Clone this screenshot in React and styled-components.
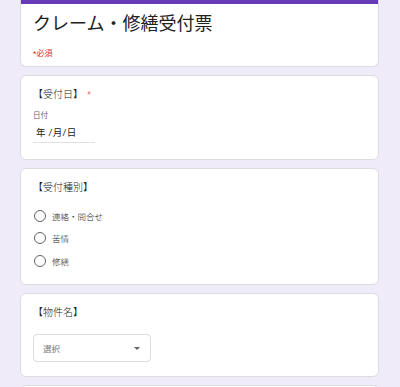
import React from 'react';
import styled, { createGlobalStyle } from 'styled-components';

const GlobalStyle = createGlobalStyle`
  html, body {
    margin: 0;
    padding: 0;
    background: #f0ebf8;
  }
  body {
    font-family: Roboto, 'Noto Sans CJK JP', sans-serif;
    color: #202124;
  }
`;

const Page = styled.div`
  display: flex;
  flex-direction: column;
  gap: 8px;
  padding: 0 21px 0 20px;
  width: 400px;
  height: 387px;
  box-sizing: border-box;
  overflow: hidden;
`;

const Card = styled.div`
  background: #fff;
  border: 1px solid #dadce0;
  border-radius: 6px;
  box-sizing: border-box;
  height: ${p => p.h}px;
  flex-shrink: 0;
  padding: 12px 12px;
  overflow: hidden;
`;

const HeadCard = styled(Card)`
  border-top: none;
  border-top-left-radius: 0;
  border-top-right-radius: 0;
  padding: 0;
`;

const Bar = styled.div`
  height: 4px;
  background: #673ab7;
`;

const HeadBody = styled.div`
  padding: 8px 12px 0;
`;

const Title = styled.h1`
  margin: 0;
  font-size: 18px;
  line-height: 24px;
  font-weight: 400;
  color: #202124;
`;

const Required = styled.div`
  margin-top: 13px;
  font-size: 8px;
  line-height: 10px;
  color: #d93025;
`;

const Label = styled.div`
  font-size: 10px;
  line-height: 14px;
  font-weight: 300;
  color: #202124;
  display: flex;
  gap: 4px;
`;

const Star = styled.span`
  color: #d93025;
  font-size: 9px;
`;

const SubLabel = styled.div`
  margin-top: 9px;
  font-size: 7.5px;
  line-height: 10px;
  color: #5f6368;
`;

const DateInput = styled.div`
  margin-top: 5px;
  width: 62px;
  font-size: 9.5px;
  line-height: 14px;
  padding: 0 0 2px 3px;
  box-sizing: border-box;
  color: #202124;
  border-bottom: 1px solid #e0e0e0;
  letter-spacing: 0.3px;
`;

const Options = styled.div`
  margin-top: 14px;
  display: flex;
  flex-direction: column;
  gap: 9.5px;
`;

const Option = styled.div`
  display: flex;
  align-items: center;
  gap: 6px;
  height: 13px;
  padding-left: 1px;
  font-size: 8.5px;
  font-weight: 300;
  color: #202124;
`;

const Radio = styled.span`
  width: 12px;
  height: 12px;
  border: 1.5px solid #5f6368;
  border-radius: 50%;
  box-sizing: border-box;
  flex-shrink: 0;
`;

const Select = styled.div`
  margin-top: 14px;
  width: 118px;
  height: 28px;
  border: 1px solid #dadce0;
  border-radius: 4px;
  box-sizing: border-box;
  display: flex;
  align-items: center;
  justify-content: space-between;
  padding: 0 10px 0 9px;
  font-size: 8.5px;
  color: #70757a;
`;

const Arrow = styled.span`
  width: 0;
  height: 0;
  border-left: 3px solid transparent;
  border-right: 3px solid transparent;
  border-top: 3px solid #5f6368;
`;

export default function App() {
  return (
    <>
      <GlobalStyle />
      <Page>
        <HeadCard h={67}>
          <Bar />
          <HeadBody>
            <Title>クレーム・修繕受付票</Title>
            <Required>*必須</Required>
          </HeadBody>
        </HeadCard>

        <Card h={85}>
          <Label>【受付日】<Star>*</Star></Label>
          <SubLabel>日付</SubLabel>
          <DateInput>年 /月/日</DateInput>
        </Card>

        <Card h={117}>
          <Label>【受付種別】</Label>
          <Options>
            {['連絡・問合せ', '苦情', '修繕'].map(o => (
              <Option key={o}>
                <Radio />
                {o}
              </Option>
            ))}
          </Options>
        </Card>

        <Card h={84}>
          <Label>【物件名】</Label>
          <Select>
            選択
            <Arrow />
          </Select>
        </Card>

        <Card h={40} />
      </Page>
    </>
  );
}
